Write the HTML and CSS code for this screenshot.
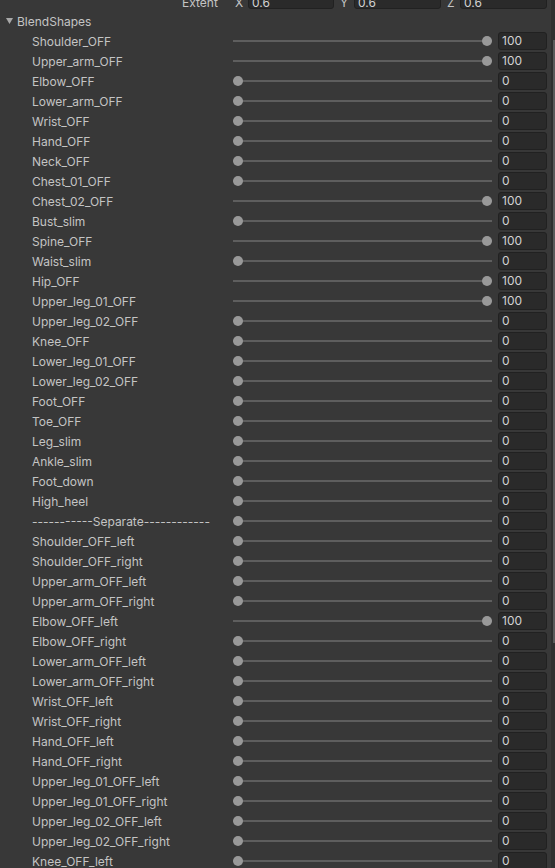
FILE: index.html
```html
<!DOCTYPE html>
<html>
<head>
<meta charset="utf-8">
<link rel="stylesheet" href="styles.css">
</head>
<body>
<div class="window">
  <div class="content">
    <div class="extent-row">
      <span class="ext-label">Extent</span>
      <span class="axis ax-x">X</span>
      <span class="field ext-field f-x">0.6</span>
      <span class="axis ax-y">Y</span>
      <span class="field ext-field f-y">0.6</span>
      <span class="axis ax-z">Z</span>
      <span class="field ext-field f-z">0.6</span>
    </div>
    <div class="foldout">
      <svg class="tri" width="7" height="6" viewBox="0 0 7 6"><path d="M0 0 H7 L3.5 6 Z" fill="#a8a8a8"/></svg>
      <span>BlendShapes</span>
    </div>
    <div class="list" id="list"></div>
  </div>
  <div class="scrollbar"><div class="thumb"></div></div>
</div>
<script>
const items = [
["Shoulder_OFF",100],["Upper_arm_OFF",100],["Elbow_OFF",0],["Lower_arm_OFF",0],["Wrist_OFF",0],["Hand_OFF",0],["Neck_OFF",0],["Chest_01_OFF",0],["Chest_02_OFF",100],["Bust_slim",0],["Spine_OFF",100],["Waist_slim",0],["Hip_OFF",100],["Upper_leg_01_OFF",100],["Upper_leg_02_OFF",0],["Knee_OFF",0],["Lower_leg_01_OFF",0],["Lower_leg_02_OFF",0],["Foot_OFF",0],["Toe_OFF",0],["Leg_slim",0],["Ankle_slim",0],["Foot_down",0],["High_heel",0],["-----------Separate------------",0],["Shoulder_OFF_left",0],["Shoulder_OFF_right",0],["Upper_arm_OFF_left",0],["Upper_arm_OFF_right",0],["Elbow_OFF_left",100],["Elbow_OFF_right",0],["Lower_arm_OFF_left",0],["Lower_arm_OFF_right",0],["Wrist_OFF_left",0],["Wrist_OFF_right",0],["Hand_OFF_left",0],["Hand_OFF_right",0],["Upper_leg_01_OFF_left",0],["Upper_leg_01_OFF_right",0],["Upper_leg_02_OFF_left",0],["Upper_leg_02_OFF_right",0],["Knee_OFF_left",0]
];
const list = document.getElementById('list');
for (const [name, v] of items) {
  const row = document.createElement('div');
  row.className = 'row';
  row.innerHTML = '<span class="name"></span><div class="slider"><div class="track"></div><div class="knob"></div></div><span class="field num"></span>';
  row.querySelector('.name').textContent = name;
  row.querySelector('.knob').style.setProperty('--v', v / 100);
  row.querySelector('.num').textContent = v;
  list.appendChild(row);
}
</script>
</body>
</html>
```

FILE: styles.css
```css
html, body {
  margin: 0;
  padding: 0;
  background: #383838;
  overflow: hidden;
}
body {
  font-family: Inter, "Noto Sans", "DejaVu Sans", sans-serif;
  font-size: 12px;
  color: #c4c4c4;
}
.window {
  display: flex;
  width: 555px;
  height: 868px;
  overflow: hidden;
}
.content {
  width: 551px;
  margin-top: -9px;
}
.scrollbar {
  width: 4px;
  height: 868px;
  background: #2f2f2f;
  display: flex;
  justify-content: flex-end;
}
.thumb {
  width: 2px;
  height: 603px;
  margin-top: 40px;
  background: #5a5a5a;
}
.extent-row {
  display: flex;
  align-items: flex-start;
  height: 20px;
}
.ext-label {
  width: 51px;
  padding-left: 182px;
  padding-top: 3px;
  line-height: 18px;
  box-sizing: content-box;
  height: 15px;
}
.axis {
  box-sizing: border-box;
  line-height: 18px;
  padding-top: 3px;
  height: 18px;
}
.ax-x { width: 15px; padding-left: 2px; }
.ax-y { width: 20px; padding-left: 6px; }
.ax-z { width: 19px; padding-left: 6px; }
.field {
  box-sizing: border-box;
  height: 18px;
  line-height: 16px;
  background: #2a2a2a;
  border: 1px solid #212121;
  border-radius: 3px;
  padding-left: 3px;
  color: #d2d2d2;
}
.ext-field {
  padding-top: 3px;
  overflow: hidden;
}
.f-x { width: 86px; }
.f-y { width: 87px; }
.f-z { width: 87px; }
.foldout {
  display: flex;
  align-items: center;
  height: 20px;
  padding-left: 6px;
  gap: 4px;
}
.tri { flex: none; }
.row {
  display: grid;
  grid-template-columns: 233px 259px 49px;
  align-items: center;
  height: 20px;
}
.name {
  padding-left: 32px;
  white-space: nowrap;
}
.slider {
  position: relative;
  height: 20px;
  display: flex;
  align-items: center;
}
.track {
  width: 100%;
  height: 2px;
  background: #5e5e5e;
}
.knob {
  position: absolute;
  top: 5px;
  left: calc(var(--v) * 249px);
  width: 10px;
  height: 10px;
  border-radius: 50%;
  background: #999999;
}
.num {
  margin-left: 6px;
  width: 49px;
}
```
